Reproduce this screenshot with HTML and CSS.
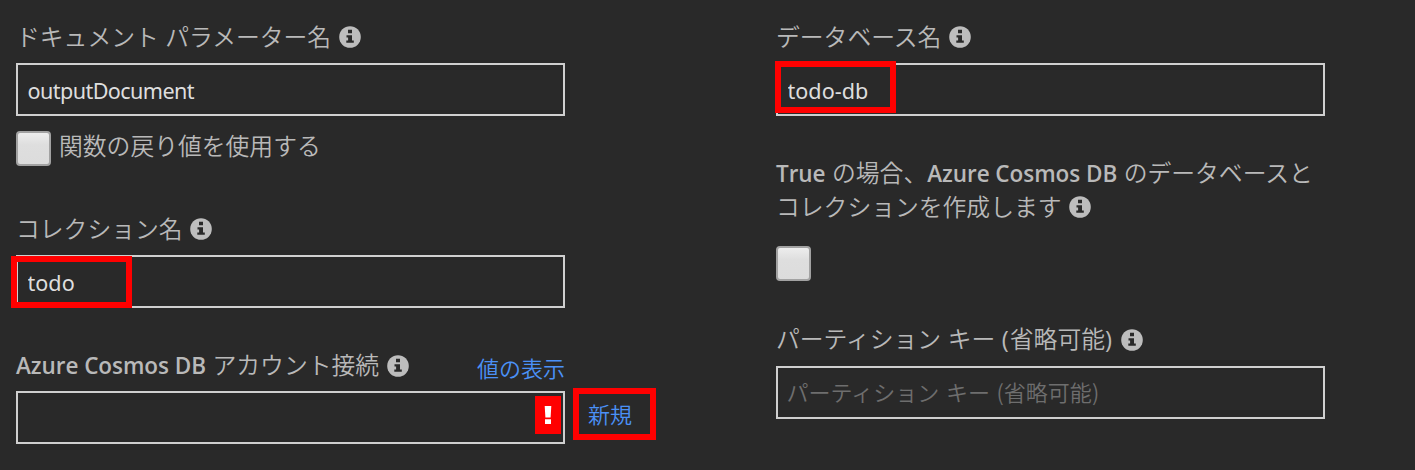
FILE: index.html
```
<!DOCTYPE html>
<html lang="ja">
<head>
<meta charset="utf-8">
<title>Azure Cosmos DB 出力</title>
<link rel="stylesheet" href="styles.css">
</head>
<body>
<svg class="defs" aria-hidden="true">
  <symbol id="info" viewBox="0 0 22 22">
    <circle cx="11" cy="11" r="10.8" fill="#bdbdbd"/>
    <path d="M9 3.8h4v3.5H9zM7.5 9.2H13v5.3h1.8v2.2H7.3v-2.2H9.1v-3.1H7.5z" fill="#292929"/>
  </symbol>
</svg>
<form class="settings">
  <div class="column">
    <section class="field">
      <label class="label" for="doc"><span>ドキュメント パラメーター名</span><svg class="info"><use href="#info"/></svg></label>
      <div class="control"><input class="input input-doc" id="doc" value="outputDocument"></div>
      <div class="option"><span class="check"></span><span class="option-text">関数の戻り値を使用する</span></div>
    </section>
    <section class="field field-collection">
      <label class="label" for="collection"><span>コレクション名</span><svg class="info"><use href="#info"/></svg></label>
      <div class="control"><input class="input" id="collection" value="todo"><span class="mark mark-collection"></span></div>
    </section>
    <section class="field field-account">
      <div class="label"><span><b class="latin">Azure Cosmos DB</b> アカウント接続</span><svg class="info"><use href="#info"/></svg><a class="link show">値の表示</a></div>
      <div class="control"><input class="input"><span class="error"><svg class="bang" viewBox="0 0 8 18"><path d="M.7 0h6.6L6.6 11.4H1.4zM1 13.2h6V18H1z" fill="#fff"/></svg></span><a class="link new">新規</a></div>
    </section>
  </div>
  <div class="column">
    <section class="field">
      <label class="label" for="db"><span>データベース名</span><svg class="info"><use href="#info"/></svg></label>
      <div class="control"><input class="input" id="db" value="todo-db"><span class="mark mark-db"></span></div>
    </section>
    <section class="field field-create">
      <div class="label"><span><b class="latin">True</b> の場合、<b class="latin">Azure Cosmos DB</b> のデータベースと</span></div>
      <div class="label"><span>コレクションを作成します</span><svg class="info"><use href="#info"/></svg></div>
      <span class="check check-create"></span>
    </section>
    <section class="field field-partition">
      <label class="label" for="key"><span>パーティション キー <span class="paren">(</span>省略可能<span class="paren">)</span></span><svg class="info"><use href="#info"/></svg></label>
      <div class="control"><input class="input input-key" id="key" placeholder="パーティション キー (省略可能)"></div>
    </section>
  </div>
</form>
</body>
</html>
```

FILE: styles.css
```
* { box-sizing: border-box; }
body {
  margin: 0;
  height: 470px;
  overflow: hidden;
  background: #292929;
  color: #b9b9b9;
  font-family: "Noto Sans", "Noto Sans CJK JP", sans-serif;
}
.defs { position: absolute; width: 0; height: 0; }
.settings {
  display: grid;
  grid-template-columns: 549px 549px;
  column-gap: 211px;
  padding: 21px 0 0 16px;
}
.label {
  display: flex;
  align-items: center;
  height: 33px;
  font-size: 23.8px;
  font-weight: 350;
  line-height: 33px;
  white-space: nowrap;
  word-spacing: 1.2px;
  font-family: "Noto Sans CJK JP", sans-serif;
}
.label > span { margin-top: -4px; }
.latin { font: 600 22.5px/33px "Open Sans", "Noto Sans", sans-serif; word-spacing: 0; letter-spacing: -0.05px; }
.paren { font: 500 23.8px/33px "Open Sans", sans-serif; letter-spacing: 1px; }
.info { flex: none; width: 22px; height: 22px; margin: -1px 0 0 7.7px; }
.control { position: relative; display: flex; height: 53px; margin-top: 9px; }
.input {
  flex: none;
  width: 549px;
  height: 53px;
  padding: 2px 9px 0 9.5px;
  border: 2px solid #cfcfcf;
  border-radius: 0;
  outline: 0;
  background: #292929;
  color: #dedede;
  font: 400 21.6px "Noto Sans", "Noto Sans CJK JP", sans-serif;
}
.input-doc { letter-spacing: -0.58px; }
.input-key { padding: 0 9px 1px 8.5px; }
.input::placeholder {
  color: #6e6e6e;
  opacity: 1;
  font-family: "Noto Sans CJK JP", sans-serif;
  font-size: 22px;
  font-weight: 350;
  word-spacing: 1.8px;
}
.option { display: flex; align-items: center; height: 35px; margin-top: 15px; }
.option-text {
  margin: -8px 0 0 8px;
  font: 350 23.8px/33px "Noto Sans CJK JP", sans-serif;
}
.check {
  display: block;
  flex: none;
  width: 35px;
  height: 35px;
  border: 2px solid #a2a2a2;
  border-radius: 4px;
  background: linear-gradient(#ededed, #dedede 38%, #dcdcdc);
}
.check-create { margin-top: 22px; }
.field-collection { margin-top: 47px; }
.field-account { margin-top: 42px; }
.field-account .control { margin-top: 8px; }
.field-create { margin-top: 42px; }
.field-partition { margin-top: 43px; }
.link { color: #4b91f7; font: 350 22px/33px "Noto Sans CJK JP", sans-serif; }
.show { margin: 2px 0 0 auto; }
.mark { position: absolute; width: 121px; height: 52px; border: 6px solid #f00; }
.mark-collection { left: -5px; top: 1px; }
.mark-db { left: -1px; top: -2px; }
.error {
  position: absolute;
  left: 519px;
  top: 5px;
  display: flex;
  align-items: center;
  justify-content: center;
  width: 26px;
  height: 38px;
  background: #f00;
}
.bang { width: 8px; height: 18px; }
.new {
  flex: none;
  width: 83px;
  height: 52px;
  margin: -3px 0 0 8px;
  padding-left: 9px;
  border: 6px solid #f00;
  line-height: 38px;
}
```
